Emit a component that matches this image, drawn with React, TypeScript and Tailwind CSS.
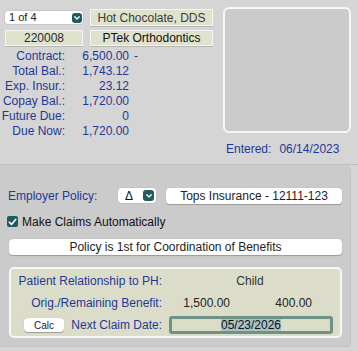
import React from 'react';

const blue = 'text-[#1f3896]';

function Chevron({ size = 'w-[10px] h-[10px]' }: { size?: string }) {
  return (
    <span className={`${size} rounded-[3px] bg-[#1e5a60] flex items-center justify-center`}>
      <svg width="6" height="4" viewBox="0 0 6 4" fill="none">
        <path d="M0.8 0.8 L3 3 L5.2 0.8" stroke="white" strokeWidth="1.3" strokeLinecap="round" strokeLinejoin="round" />
      </svg>
    </span>
  );
}

const stats = [
  { label: 'Contract:', value: '6,500.00', suffix: '-' },
  { label: 'Total Bal.:', value: '1,743.12' },
  { label: 'Exp. Insur.:', value: '23.12' },
  { label: 'Copay Bal.:', value: '1,720.00' },
  { label: 'Future Due:', value: '0' },
  { label: 'Due Now:', value: '1,720.00' },
];

export default function App() {
  return (
    <div className="w-[358px] h-[351px] bg-[#d5d5d5] font-['Liberation_Sans',Arial,sans-serif] text-[12px] overflow-hidden whitespace-nowrap">
      {/* Top section */}
      <div className="flex h-[165px] border-b border-[#bebebe]">
        <div className="w-[218px] pt-[9px]">
          <div className="flex items-start gap-[7px] pl-[5px]">
            <div className="mt-[2px] w-[78px] h-[13px] bg-white rounded-[3px] shadow-[0_0_0_0.5px_#b8b8b8] flex items-center justify-between pl-[4px] pr-[1px] text-[11px] text-[#222]">
              <span>1 of 4</span>
              <Chevron />
            </div>
            <div className="w-[123px] h-[17px] bg-[#dfe2cd] border border-[#f4f4f4] shadow-[0_1px_0_#b5b5b5] flex items-center justify-center text-[12px] text-[#3a3a3a]">
              Hot Chocolate, DDS
            </div>
          </div>
          <div className="flex gap-[7px] mt-[4px] pl-[5px]">
            <div className="w-[78px] h-[16px] bg-[#dfe2cd] border border-[#f4f4f4] shadow-[0_1px_0_#b5b5b5] flex items-center justify-center text-[12px] text-[#2a2a2a]">
              220008
            </div>
            <div className="w-[123px] h-[16px] bg-[#dfe2cd] border border-[#f4f4f4] shadow-[0_1px_0_#b5b5b5] flex items-center justify-center text-[12px] text-[#111]">
              PTek Orthodontics
            </div>
          </div>
          <div className={`mt-[3px] grid grid-cols-[65px_64px_auto] leading-[15px] ${blue}`}>
            {stats.map((s) => (
              <React.Fragment key={s.label}>
                <span className="text-right">{s.label}</span>
                <span className="text-right">{s.value}</span>
                <span className="pl-[5px]">{s.suffix ?? ''}</span>
              </React.Fragment>
            ))}
          </div>
        </div>
        <div className="pl-[5px] pt-[7px]">
          <div className="w-[128px] h-[126px] rounded-[6px] border-2 border-[#f7f7f7] bg-[#cbcbcb]" />
          <div className={`mt-[9px] pl-[3px] leading-[14px] ${blue} flex gap-[8px]`}>
            <span>Entered:</span>
            <span>06/14/2023</span>
          </div>
        </div>
      </div>

      {/* Lower panel */}
      <div className="w-[351px] h-[182px] bg-[#cbcbcb] rounded-tr-[6px] rounded-br-[3px] border-r border-b border-[#c2c2c2] pt-[22px]">
        <div className="flex items-center h-[17px]">
          <span className={`pl-[8px] w-[118px] ${blue}`}>Employer Policy:</span>
          <div className="w-[38px] h-[15px] bg-white rounded-[4px] shadow-[0_0_0_0.5px_#b8b8b8] flex items-center justify-between pl-[7px] pr-[2px] text-[12px] text-[#111]">
            <span>Δ</span>
            <Chevron size="w-[11px] h-[11px]" />
          </div>
          <div className="ml-[10px] w-[176px] h-[16px] bg-white rounded-[4px] shadow-[0_0.5px_1px_#9a9a9a] flex items-center justify-center text-[#222]">
            Tops Insurance - 12111-123
          </div>
        </div>

        <div className="flex items-center h-[13px] mt-[11px] pl-[7px]">
          <span className="w-[11px] h-[11px] rounded-[2px] bg-[#1e5a60] flex items-center justify-center">
            <svg width="9" height="8" viewBox="0 0 9 8" fill="none">
              <path d="M1.3 4.2 L3.5 6.4 L7.8 1.3" stroke="white" strokeWidth="1.6" strokeLinecap="round" strokeLinejoin="round" />
            </svg>
          </span>
          <span className="ml-[4px] text-[#111]">Make Claims Automatically</span>
        </div>

        <div className="ml-[9px] mt-[11px] w-[333px] h-[16px] bg-white rounded-[4px] shadow-[0_0.5px_1px_#9a9a9a] flex items-center justify-center text-[#222]">
          Policy is 1st for Coordination of Benefits
        </div>

        <div className="ml-[9px] mt-[12px] w-[333px] h-[71px] rounded-[5px] border-2 border-[#f7f7f7] bg-[#dcddc8] pt-[1px]">
          <div className="flex items-center h-[22px]">
            <span className={`w-[151px] text-right ${blue}`}>Patient Relationship to PH:</span>
            <span className="w-[176px] text-center text-[#333]">Child</span>
          </div>
          <div className="flex items-center h-[22px]">
            <span className={`w-[151px] text-right ${blue}`}>Orig./Remaining Benefit:</span>
            <span className="w-[68px] text-right text-[#222]">1,500.00</span>
            <span className="w-[82px] text-right text-[#222]">400.00</span>
          </div>
          <div className="flex items-center h-[22px]">
            <div className="w-[151px] flex items-center justify-between pl-[13px]">
              <span className="w-[40px] h-[14px] bg-white rounded-[4px] shadow-[0_0.5px_1px_#9a9a9a] flex items-center justify-center text-[10px] text-[#222]">
                Calc
              </span>
              <span className={blue}>Next Claim Date:</span>
            </div>
            <div className="ml-[7px] w-[164px] h-[18px] rounded-[3px] border-[3px] border-[#6d9287] flex items-center justify-center">
              <span className="bg-[#a9c1c3] leading-[12px] text-[#111] text-[12px]">05/23/2026</span>
            </div>
          </div>
        </div>
      </div>
    </div>
  );
}
